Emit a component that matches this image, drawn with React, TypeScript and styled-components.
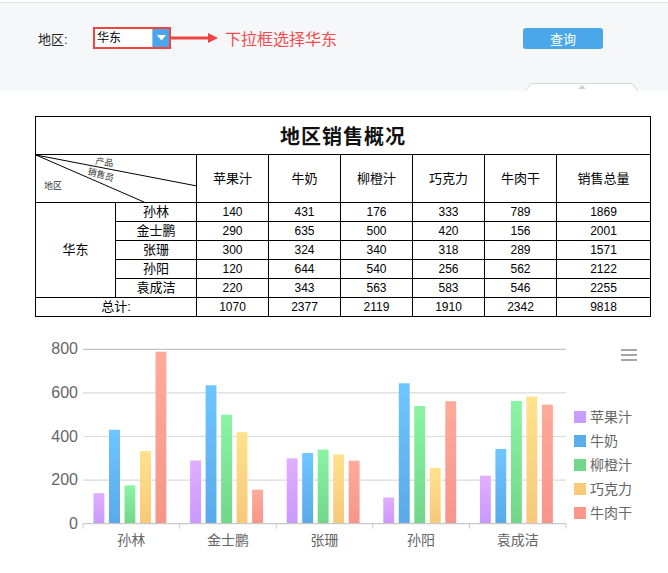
import React from 'react';
import styled, { createGlobalStyle } from 'styled-components';

const GlobalStyle = createGlobalStyle`
  html, body {
    margin: 0;
    padding: 0;
    background: #ffffff;
    font-family: "Liberation Sans", "Noto Sans CJK SC", sans-serif;
  }
`;

const products = ['苹果汁', '牛奶', '柳橙汁', '巧克力', '牛肉干'];

const rows = [
  { name: '孙林', values: [140, 431, 176, 333, 789] },
  { name: '金士鹏', values: [290, 635, 500, 420, 156] },
  { name: '张珊', values: [300, 324, 340, 318, 289] },
  { name: '孙阳', values: [120, 644, 540, 256, 562] },
  { name: '袁成洁', values: [220, 343, 563, 583, 546] },
];

const seriesColors = [
  { top: '#e2aeff', bottom: '#c898ff', legend: '#c99cff' },
  { top: '#6ec6ff', bottom: '#5aa9e8', legend: '#5aacea' },
  { top: '#8af4a4', bottom: '#72d68a', legend: '#74d88c' },
  { top: '#ffe28c', bottom: '#f6c87a', legend: '#f8ca7c' },
  { top: '#ffaa9a', bottom: '#f6958a', legend: '#fa978a' },
];

const Page = styled.div`
  padding-top: 2px;
`;

const FilterBar = styled.div`
  display: flex;
  flex-direction: column;
  height: 88px;
  background: #f6f7f9;
  border-top: 1px solid #e3e5e9;
`;

const FilterRow = styled.div`
  display: flex;
  align-items: center;
  height: 22px;
  margin-top: 24px;
  padding-left: 38px;
`;

const Label = styled.span`
  font-size: 13px;
  color: #222;
  width: 55px;
`;

const SelectBox = styled.div`
  display: flex;
  width: 74px;
  height: 18px;
  border: 2px solid #f04444;
  background: #fff;
`;

const SelectText = styled.span`
  flex: 1;
  font-size: 12px;
  line-height: 18px;
  padding-left: 2px;
  color: #000;
`;

const SelectButton = styled.span`
  width: 16px;
  background: #4aa6e8;
  border-left: 1px solid #8ec4ee;
  display: flex;
  align-items: center;
  justify-content: center;
`;

const Note = styled.span`
  font-size: 16px;
  color: #f24a4a;
  margin-left: 7px;
`;

const QueryButton = styled.button`
  margin-left: 186px;
  width: 80px;
  height: 21px;
  border: none;
  border-radius: 3px;
  background: #4aa8ea;
  color: #fff;
  font-size: 13px;
  font-family: "Liberation Sans", "Noto Sans CJK SC", sans-serif;
  padding: 0;
`;

const CollapseTab = styled.div`
  margin-top: auto;
  align-self: flex-end;
  margin-right: 30px;
  height: 8px;
  width: 113px;
  display: flex;
`;

const Report = styled.div`
  padding: 25px 18px 0 35px;
`;

const Table = styled.table`
  border-collapse: collapse;
  width: 615px;
  table-layout: fixed;
`;

const Row = styled.tr<{ $h: number }>`
  height: ${(p) => p.$h}px;
`;

const Cell = styled.td<{ $size?: number }>`
  border: 1px solid #000;
  padding: 0;
  font-size: ${(p) => p.$size ?? 12}px;
  text-align: center;
  color: #000;
  line-height: 14px;
`;

const TitleCell = styled.td`
  border: 1px solid #000;
  padding: 0;
  font-size: 20px;
  line-height: 24px;
  font-weight: bold;
  text-align: center;
  letter-spacing: 1px;
  font-family: "Noto Sans CJK SC", serif;
  color: #111;
`;

const DiagCell = styled.td`
  border: 1px solid #000;
  padding: 0;
`;

const ChartBox = styled.div`
  margin-top: 9px;
  height: 245px;
`;

const DiagonalHeader = () => (
  <svg width="161" height="47" viewBox="0 0 161 47" style={{ display: 'block' }}>
    <line x1="0" y1="0" x2="161" y2="31" stroke="#000" strokeWidth="1" />
    <line x1="0" y1="0" x2="108" y2="47" stroke="#000" strokeWidth="1" />
    <text x="59" y="9" fontSize="9" fill="#333" transform="rotate(8 59 9)">产品</text>
    <text x="51" y="19" fontSize="9" fill="#333" transform="rotate(16 51 19)">销售员</text>
    <text x="8" y="34" fontSize="9" fill="#333">地区</text>
  </svg>
);

const Chart = () => {
  const x0 = 83;
  const x1 = 566;
  const base = 522.7;
  const scale = 174.4 / 800;
  const cat = (x1 - x0) / 5;
  const offsets = [10.5, 26, 41.5, 57, 72.5];
  return (
    <svg width="668" height="245" viewBox="0 325 668 245" style={{ display: 'block' }}>
      <defs>
        {seriesColors.map((c, i) => (
          <linearGradient key={i} id={`g${i}`} x1="0" y1="0" x2="0" y2="1">
            <stop offset="0" stopColor={c.top} />
            <stop offset="1" stopColor={c.bottom} />
          </linearGradient>
        ))}
      </defs>
      {[800, 600, 400, 200].map((v) => (
        <line
          key={v}
          x1={x0}
          x2={x1}
          y1={base - v * scale}
          y2={base - v * scale}
          stroke={v === 800 ? '#c4c4c4' : '#dadada'}
          strokeWidth="1.2"
        />
      ))}
      {[800, 600, 400, 200, 0].map((v) => (
        <text
          key={v}
          x="78"
          y={base - v * scale + 5}
          fontSize="16"
          fill="#666"
          textAnchor="end"
          fontFamily="Liberation Sans, sans-serif"
        >
          {v}
        </text>
      ))}
      {rows.map((r, c) =>
        r.values.map((v, s) => {
          const h = v * scale;
          const bx = x0 + c * cat + offsets[s];
          return (
            <g key={`${c}-${s}`}>
              <rect x={bx} y={base - h} width="11" height={h} fill={`url(#g${s})`} />
              <rect x={bx + 11} y={base - h} width="1" height={h} fill="#fff" opacity="0.6" />
            </g>
          );
        })
      )}
      <line x1={x0} x2={x1} y1={base} y2={base} stroke="#c8c8c8" strokeWidth="1.2" />
      {[0, 1, 2, 3, 4, 5].map((i) => (
        <line
          key={i}
          x1={x0 + i * cat}
          x2={x0 + i * cat}
          y1={base}
          y2={base + 5}
          stroke="#c8c8c8"
          strokeWidth="1"
        />
      ))}
      {rows.map((r, c) => (
        <text
          key={r.name}
          x={x0 + c * cat + cat / 2}
          y="544"
          fontSize="14"
          fill="#666"
          textAnchor="middle"
          fontFamily="Noto Sans CJK SC, sans-serif"
        >
          {r.name}
        </text>
      ))}
      {products.map((p, i) => (
        <g key={p}>
          <rect x="574" y={410 + i * 24} width="12" height="12" fill={seriesColors[i].legend} />
          <text
            x="590"
            y={421 + i * 24}
            fontSize="14"
            fill="#666"
            fontFamily="Noto Sans CJK SC, sans-serif"
          >
            {p}
          </text>
        </g>
      ))}
      {[349, 354, 359].map((y) => (
        <rect key={y} x="621" y={y - 1} width="16" height="2" fill="#a6a6a6" />
      ))}
    </svg>
  );
};

const App = () => {
  const totals = products.map((_, i) => rows.reduce((a, r) => a + r.values[i], 0));
  const grand = totals.reduce((a, b) => a + b, 0);
  return (
    <Page>
      <GlobalStyle />
      <FilterBar>
        <FilterRow>
          <Label>地区:</Label>
          <SelectBox>
            <SelectText>华东</SelectText>
            <SelectButton>
              <svg width="9" height="6" viewBox="0 0 9 6">
                <path d="M0 0 L9 0 L4.5 5.5 Z" fill="#fff" />
              </svg>
            </SelectButton>
          </SelectBox>
          <svg width="47" height="12" viewBox="0 0 47 12" style={{ display: 'block' }}>
            <line x1="0" y1="6" x2="38" y2="6" stroke="#f04444" strokeWidth="3" />
            <path d="M37 1 L47 6 L37 11 Z" fill="#f04444" />
          </svg>
          <Note>下拉框选择华东</Note>
          <QueryButton>查询</QueryButton>
        </FilterRow>
        <CollapseTab>
          <svg width="113" height="8" viewBox="0 0 113 8" style={{ display: 'block' }}>
            <path d="M0 8 L6 0.5 L107 0.5 L113 8" fill="#fff" stroke="#d4d4d4" strokeWidth="1" />
            <path d="M53 6 L57 2 L61 6 Z" fill="#cfcfcf" />
          </svg>
        </CollapseTab>
      </FilterBar>
      <Report>
        <Table>
          <colgroup>
            <col style={{ width: 80 }} />
            <col style={{ width: 81 }} />
            {[72, 72, 72, 72, 72, 94].map((w, i) => (
              <col key={i} style={{ width: w }} />
            ))}
          </colgroup>
          <tbody>
            <Row $h={38}>
              <TitleCell colSpan={8}>地区销售概况</TitleCell>
            </Row>
            <Row $h={48}>
              <DiagCell colSpan={2}>
                <DiagonalHeader />
              </DiagCell>
              {products.map((p) => (
                <Cell key={p} $size={13}>
                  {p}
                </Cell>
              ))}
              <Cell $size={13}>销售总量</Cell>
            </Row>
            {rows.map((r, i) => (
              <Row $h={19} key={r.name}>
                {i === 0 && (
                  <Cell rowSpan={5} $size={13}>
                    华东
                  </Cell>
                )}
                <Cell $size={13}>{r.name}</Cell>
                {r.values.map((v, j) => (
                  <Cell key={j}>{v}</Cell>
                ))}
                <Cell>{r.values.reduce((a, b) => a + b, 0)}</Cell>
              </Row>
            ))}
            <Row $h={19}>
              <Cell colSpan={2} $size={13}>
                总计:
              </Cell>
              {totals.map((t, i) => (
                <Cell key={i}>{t}</Cell>
              ))}
              <Cell>{grand}</Cell>
            </Row>
          </tbody>
        </Table>
      </Report>
      <ChartBox>
        <Chart />
      </ChartBox>
    </Page>
  );
};

export default App;
